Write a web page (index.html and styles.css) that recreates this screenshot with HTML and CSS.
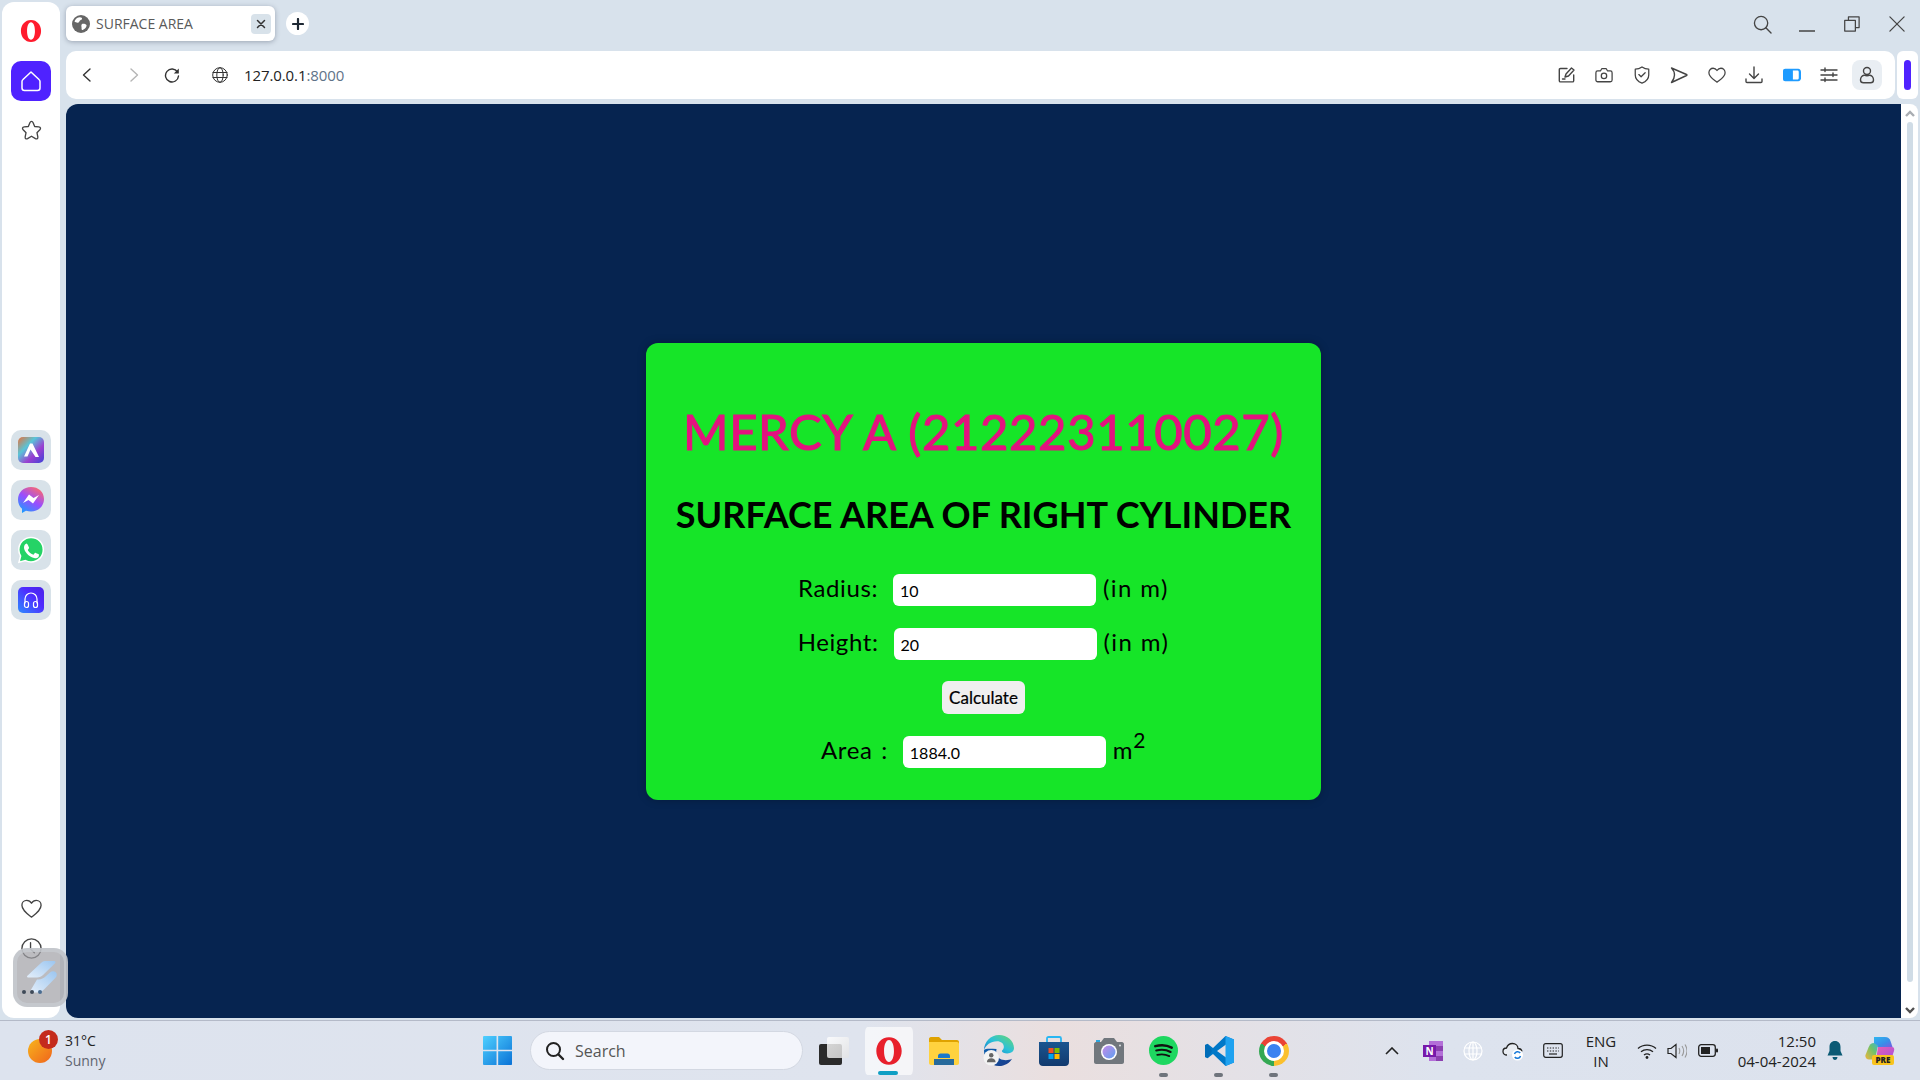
FILE: index.html
```html
<!DOCTYPE html>
<html lang="en">
<head>
  <meta charset="UTF-8" />
  <meta name="viewport" content="width=device-width, initial-scale=1.0" />
  <title>SURFACE AREA</title>
  <link rel="stylesheet" href="styles.css">
</head>
<body>
  <div class="browser">
    <aside class="sidebar">
      <svg class="opera-logo" viewBox="0 0 24 26"><path fill="#ff1b2d" fill-rule="evenodd" d="M12 1C5.5 1 1 6.4 1 13s4.5 12 11 12 11-5.4 11-12S18.500 1 12 1zm0 2.500c2.700 0 4.300 4.300 4.300 9.500s-1.600 9.500-4.300 9.500S7.700 18.200 7.700 13 9.300 3.500 12 3.500z"/></svg>
      <div class="home-tile">
        <svg viewBox="0 0 24 24" width="24" height="24"><path class="line-white" d="M12 3 4 10.500c-.7.6-1 1.200-1 2V19c0 1.500 1 2.500 2.500 2.500h13c1.500 0 2.500-1 2.500-2.500v-6.500c0-.8-.3-1.400-1-2z"/></svg>
      </div>
      <svg class="side-icon star-icon" viewBox="0 0 24 24"><path class="line" d="M12 2.500c.8 0 1.300.5 1.700 1.400l1.600 3.900 4.300.5c2 .3 2.300 1.700 1.100 3l-3 3 .9 4.300c.3 1.800-1 2.700-2.500 1.900L12 18l-4.100 2.500c-1.500.8-2.800-.1-2.500-1.900l.9-4.300-3-3c-1.200-1.300-.9-2.700 1.100-3l4.300-.5 1.600-3.900c.4-.9.9-1.400 1.700-1.400z"/></svg>

      <div class="app-tiles">
        <div class="app-tile">
          <svg viewBox="0 0 26 26" width="26" height="26">
            <defs><linearGradient id="ariaBg" x1="0" y1="0" x2="1" y2="1"><stop offset="0" stop-color="#e8703a"/><stop offset=".35" stop-color="#58c5d8"/><stop offset=".65" stop-color="#9a3fd0"/><stop offset="1" stop-color="#3d43d8"/></linearGradient></defs>
            <rect width="26" height="26" rx="5" fill="url(#ariaBg)"/>
            <path fill="#fff" d="M12 6.500 6 19.500h3.500l3-7 5 7.500h3.500L14.500 6.500z"/>
          </svg>
        </div>
        <div class="app-tile">
          <svg viewBox="0 0 28 28" width="28" height="28">
            <defs><linearGradient id="msgBg" x1=".2" y1="1" x2=".8" y2="0"><stop offset="0" stop-color="#1a9dff"/><stop offset=".5" stop-color="#9a4dff"/><stop offset="1" stop-color="#ff6968"/></linearGradient></defs>
            <path fill="url(#msgBg)" d="M14 1C6.700 1 1 6.300 1 13.500c0 3.700 1.500 7 4 9.300V27l4-2.200c1.500.4 3.200.7 5 .7 7.300 0 13-5.300 13-12.500S21.300 1 14 1z"/>
            <path fill="#fff" d="m6 17 6-8.500 4.500 3.500 5.500-3-6 8.500-4.500-3.500z"/>
          </svg>
        </div>
        <div class="app-tile">
          <svg viewBox="0 0 28 28" width="28" height="28">
            <path fill="#25d366" stroke="#fff" stroke-width="1.500" d="M14 1.500C7.200 1.500 1.800 7 1.800 13.700c0 2.300.7 4.500 1.800 6.300L2 26.300l6.500-1.700c1.700.9 3.500 1.400 5.500 1.400 6.800 0 12.300-5.500 12.300-12.300S20.800 1.500 14 1.500z"/>
            <path fill="#fff" d="M10 7.500c-.5 0-1.200.2-1.700.8C7.700 9 7 10 7 11.800s1.300 3.700 1.500 4c.2.3 2.600 4 6.300 5.500 3.100 1.200 3.700 1 4.400.9.7-.1 2.200-.9 2.500-1.800.3-.9.3-1.600.2-1.800-.1-.2-.3-.3-.7-.5l-2.500-1.200c-.4-.1-.6-.2-.9.2l-1.100 1.400c-.2.3-.4.3-.8.1-.4-.2-1.600-.6-3-1.800-1.100-1-1.800-2.200-2-2.600-.2-.4 0-.6.2-.8l.9-1.100c.1-.3.1-.5 0-.7l-1.100-2.700c-.3-.7-.6-.6-.9-.6z"/>
          </svg>
        </div>
        <div class="app-tile">
          <svg viewBox="0 0 26 26" width="26" height="26">
            <defs><linearGradient id="musicBg" x1="0" y1="1" x2="1" y2="0"><stop offset="0" stop-color="#2c8cff"/><stop offset=".6" stop-color="#4f2bff"/><stop offset="1" stop-color="#4a22e6"/></linearGradient></defs>
            <rect width="26" height="26" rx="5" fill="url(#musicBg)"/>
            <path class="line-thin-white" d="M7 16v-4a6 6 0 0 1 12 0v4"/>
            <rect class="line-thin-white" x="6.500" y="14.500" width="4" height="6" rx="2"/>
            <rect class="line-thin-white" x="15.500" y="14.500" width="4" height="6" rx="2"/>
          </svg>
        </div>
      </div>

      <svg class="side-icon heart-icon" viewBox="0 0 24 24"><path class="line" d="M12 21C7 17 2 13.500 2 8.500 2 5.500 4.300 3.500 7 3.500c2 0 3.800 1 5 3 1.200-2 3-3 5-3 2.700 0 5 2 5 5 0 5-5 8.500-10 12.500z"/></svg>
      <svg class="side-icon clock-icon" viewBox="0 0 24 24"><circle class="line" cx="12" cy="12" r="10"/><path class="line" d="M11 6v6.500l4 4"/></svg>

      <div class="drawer-tile">
        <svg viewBox="0 0 36 36" width="36" height="36">
          <defs><linearGradient id="drawerBg" x1="0" y1="1" x2="1" y2="0"><stop offset="0" stop-color="#e3eefa"/><stop offset="1" stop-color="#9cc6f0"/></linearGradient></defs>
          <path fill="url(#drawerBg)" d="M22 1h9c1.500 0 2 1.200 1 2.200L20 15c-1.600 1.600-3.400 2.500-6 2.500H5c-1 0-1.300-1-.6-1.700L18 3c1.200-1.200 2.500-2 4-2z"/>
          <path fill="url(#drawerBg)" d="M14 19.500h1.500c3-.2 5-1.200 7-3L27 12.500c1.500-1.300 4-1.500 5.500-.5 1.800 1.300 1.800 4-.2 6L21 29.500c-2 2-4 3-7 3H8c-1 0-1.300-1-.6-1.700z"/>
        </svg>
        <div class="drawer-dots"><i></i><i></i><i class="dot-blue"></i></div>
      </div>
    </aside>

    <div class="main">
      <div class="tabstrip">
        <div class="tab">
          <svg class="tab-globe" viewBox="0 0 18 18"><circle cx="9" cy="9" r="9" fill="#666"/><path fill="#fff" d="M5 3c2-1.300 4-1 5 0 .3 1.500-1 2-2 2.500-.7.5-.5 1.500-1.500 2C5.500 8 3.500 7.500 2.500 6.500 3 5 4 4 5 3zM10 9c1.500-.5 3.500 0 4.500 1 .3 1-.5 2.500-1.500 3.500-1 .8-2 1.500-3 1.500-.7-1-.3-2-.5-3-.2-1-.3-2.200.5-3z"/></svg>
          <span class="tab-title">SURFACE AREA</span>
          <span class="tab-close"><svg viewBox="0 0 10 10" width="10" height="10"><path class="line-dark" d="m1.500 1.500 7 7m0-7-7 7"/></svg></span>
        </div>
        <div class="new-tab"><svg viewBox="0 0 12 12" width="12" height="12"><path stroke="#1d2733" stroke-width="2.200" stroke-linecap="round" d="M6 1v10M1 6h10"/></svg></div>
        <div class="window-controls">
          <svg class="win-search" viewBox="0 0 20 20"><circle class="line-win" cx="8.500" cy="8.500" r="7"/><path class="line-win" d="m13.500 13.500 5.500 5.500"/></svg>
          <svg class="win-min" viewBox="0 0 17 2"><path class="line-win" d="M0 1h17"/></svg>
          <svg class="win-restore" viewBox="0 0 18 18"><rect class="line-win" x=".8" y="5" width="12" height="12"/><path class="line-win" d="M5 5V1h12v12h-4"/></svg>
          <svg class="win-close" viewBox="0 0 18 18"><path class="line-win" d="m1 1 16 16M17 1 1 17"/></svg>
        </div>
      </div>

      <div class="toolbar">
        <div class="addressbar">
          <svg class="nav-icon nav-back" viewBox="0 0 16 16"><path class="line-nav" d="M11 2 4.500 8 11 14"/></svg>
          <svg class="nav-icon nav-forward" viewBox="0 0 16 16"><path class="line-off" d="m5 2 6.500 6L5 14"/></svg>
          <svg class="nav-icon nav-reload" viewBox="0 0 16 16"><path class="line-nav" d="M13.500 5A6.500 6.500 0 1 0 14.500 9"/><path fill="#333" d="M14.800 1.500v5h-5z"/></svg>
          <svg class="nav-icon nav-globe" viewBox="0 0 16 16"><circle class="line-thin" cx="8" cy="8" r="7.300"/><ellipse class="line-thin" cx="8" cy="8" rx="3.200" ry="7.300"/><path class="line-thin" d="M1 5.500h14M1 10.500h14"/></svg>
          <span class="url">127.0.0.1<span class="url-port">:8000</span></span>
          <div class="toolbar-icons">
            <span class="tool-slot"><svg viewBox="0 0 18 18"><path class="line" d="M9 2.500H2.500c-.8 0-1.200.4-1.200 1.200v11c0 .8.4 1.200 1.200 1.200h12c.8 0 1.200-.4 1.200-1.200V9"/><path class="line" d="m7 11 1-3 5.500-6 2.500 2-5.500 6zM4.500 13H7"/></svg></span>
            <span class="tool-slot"><svg viewBox="0 0 20 18"><path class="line" d="M3 4.500h3L7.500 2h5L14 4.500h3c1 0 2 1 2 2v8c0 1.200-1 2-2 2H3c-1 0-2-.8-2-2v-8c0-1 1-2 2-2z"/><circle class="line" cx="10" cy="10" r="3"/></svg></span>
            <span class="tool-slot"><svg viewBox="0 0 18 20"><path class="line" d="M9 1c2 1.500 4.500 2.500 7.500 2.500V10c0 4.500-3.500 7.500-7.500 9-4-1.500-7.500-4.500-7.500-9V3.500C4.500 3.500 7 2.500 9 1z"/><path class="line" d="m5.500 9.500 2.500 2.500 4.500-4.500"/></svg></span>
            <span class="tool-slot"><svg viewBox="0 0 18 18"><path class="line" d="M1.500 2 16.500 8.500c.6.3.6.7 0 1L1.500 16.500c1.500-2 3-4.500 3-7.500s-1.500-5.500-3-7z"/></svg></span>
            <span class="tool-slot"><svg viewBox="0 0 20 18"><path class="line" d="M10 17C5.500 13.500 1 11 1 6.500 1 3.500 3.200 1.500 5.700 1.500c1.800 0 3.300 1 4.300 2.500 1-1.500 2.500-2.500 4.300-2.500C16.800 1.500 19 3.500 19 6.500c0 4.500-4.500 7-9 10.500z"/></svg></span>
            <span class="tool-slot"><svg viewBox="0 0 18 18"><path class="line" d="M9 1v11M4.500 8 9 12.500 13.500 8M1 13v2.500c0 .6.4 1 1 1h14c.6 0 1-.4 1-1V13"/></svg></span>
            <span class="tool-slot"><svg viewBox="0 0 20 14" class="tool-wide"><path fill="#1e9bff" d="M2.500 0H17c1.500 0 2.500 1 3 3v8c-.5 2-1.500 3-3 3H2.500C1 14 0 13 0 11.500v-9C0 1 1 0 2.500 0z"/><path fill="#fff" d="M11 2h5c.8 0 1.300.5 1.500 1.500v7c-.2 1-.7 1.500-1.500 1.500h-5z"/></svg></span>
            <span class="tool-slot"><svg viewBox="0 0 18 16"><path class="line" d="M1 3h16M1 8h16M1 13h16"/><path class="line" d="M5 1v3.500M13 6v3.500M5 11v3.500"/></svg></span>
            <span class="tool-slot tool-user"><svg viewBox="0 0 16 18"><circle class="line" cx="8" cy="5" r="3.500"/><path class="line" d="M1.500 14c0-2.500 1.800-4.500 3.500-4.800 2 .8 4 .8 6 0 1.700.3 3.500 2.300 3.500 4.800 0 1.800-1 2.800-3 2.800H4.500c-2 0-3-1-3-2.800z"/></svg></span>
          </div>
        </div>
        <div class="side-strip"><span class="strip-bar"></span></div>
      </div>

      <div class="viewport">
        <div class="page">
          <div class="card">
            <h1>MERCY A (212223110027)</h1>
            <h2>SURFACE AREA OF RIGHT CYLINDER</h2>
            <form class="calc-form">
              <div class="row">
                <label for="radius">Radius:</label>
                <input type="text" id="radius" value="10" />
                <span class="unit">(in m)</span>
              </div>
              <div class="row">
                <label for="height">Height:</label>
                <input type="text" id="height" value="20" />
                <span class="unit">(in m)</span>
              </div>
              <div class="row">
                <button type="button">Calculate</button>
              </div>
              <div class="row">
                <label class="label-area" for="area">Area :</label>
                <input type="text" id="area" value="1884.0" />
                <span class="unit unit-area">m<sup>2</sup></span>
              </div>
            </form>
          </div>
        </div>
        <div class="scrollbar">
          <svg viewBox="0 0 10 7" width="10" height="7"><path stroke="#a9adb2" stroke-width="2.400" fill="none" d="m1 6 4-4 4 4"/></svg>
          <span class="scroll-thumb"></span>
          <svg class="scroll-down" viewBox="0 0 10 7" width="10" height="7"><path stroke="#505050" stroke-width="2.400" fill="none" d="m1 1 4 4 4-4"/></svg>
        </div>
      </div>
    </div>
  </div>

  <footer class="taskbar">
    <div class="weather">
      <span class="sun"><span class="sun-badge">1</span></span>
      <div class="weather-text">
        <span class="temp">31°C</span>
        <span class="cond">Sunny</span>
      </div>
    </div>

    <div class="task-center">
      <span class="slot">
        <svg viewBox="0 0 30 30" width="29" height="29">
          <defs><linearGradient id="winBg" x1="0" y1="0" x2="1" y2="1"><stop offset="0" stop-color="#4fd0ff"/><stop offset="1" stop-color="#0a72d6"/></linearGradient></defs>
          <path fill="url(#winBg)" d="M1 0h13v14.300H0V1c0-.6.4-1 1-1zM15.700 0H29c.6 0 1 .4 1 1v13.300H15.700zM0 15.700h14V30H1c-.6 0-1-.4-1-1zM15.700 15.700H30V29c0 .6-.4 1-1 1H15.700z"/>
        </svg>
      </span>
      <div class="search-pill">
        <svg viewBox="0 0 20 20" width="20" height="20"><circle cx="8.500" cy="8.500" r="6.500" fill="none" stroke="#222" stroke-width="2"/><path stroke="#222" stroke-width="2.400" stroke-linecap="round" d="m13.500 13.500 4.500 4.500"/></svg>
        <span>Search</span>
      </div>
      <span class="slot">
        <svg viewBox="0 0 30 28" width="30" height="28">
          <defs><linearGradient id="viewTop" x1="0" y1="0" x2="1" y2="1"><stop offset="0" stop-color="#ffffff"/><stop offset="1" stop-color="#e3e3e3"/></linearGradient></defs>
          <rect y="7" width="23" height="21" rx="2" fill="#2b2b2b"/>
          <rect x="8" y="0" width="22" height="21" rx="2" fill="url(#viewTop)" fill-opacity=".82"/>
        </svg>
      </span>
      <span class="slot slot-active">
        <svg viewBox="0 0 24 26" width="28" height="30"><path fill="#e8202c" fill-rule="evenodd" d="M12 1C5.500 1 1 6.400 1 13s4.500 12 11 12 11-5.400 11-12S18.500 1 12 1zm0 2.500c2.700 0 4.300 4.300 4.300 9.500s-1.600 9.500-4.300 9.500S7.700 18.200 7.700 13 9.300 3.500 12 3.500z"/></svg>
        <i class="run-active"></i>
      </span>
      <span class="slot">
        <svg viewBox="0 0 30 28" width="30" height="28"><path fill="#dfa200" d="M0 2c0-1 .6-2 2-2h8l3 3h15c1 0 2 .8 2 2v5H0z"/><path fill="#ffd23f" d="M0 5h28c1.200 0 2 .8 2 2v19c0 1-.8 2-2 2H2c-1 0-2-1-2-2z"/><path fill="#1a78c9" d="M9 19c0-1.500 1-2.500 2.500-2.500h7c1.500 0 2.500 1 2.500 2.500v2H9z"/><path fill="#0f5ea6" d="M5 22h20v6H5z" fill-opacity=".9"/></svg>
      </span>
      <span class="slot">
        <svg viewBox="0 0 32 32" width="31" height="31">
          <defs>
            <linearGradient id="edgeTop" x1="0" y1="1" x2="1" y2="0"><stop offset="0" stop-color="#1277c9"/><stop offset=".5" stop-color="#2cc1d8"/><stop offset="1" stop-color="#6ad86c"/></linearGradient>
            <linearGradient id="edgeLow" x1="0" y1="0" x2="1" y2="1"><stop offset="0" stop-color="#0e5fae"/><stop offset="1" stop-color="#1a3c8a"/></linearGradient>
          </defs>
          <path fill="url(#edgeTop)" d="M1 16C1 7 8 0 16.500 0 25 0 32 6 32 13.500c0 3.500-3 5.500-7 5.500-3 0-5.500-1-5.500-2.500 0-1 2-1.500 2-4.500 0-3-3-5.500-7-5.500C8 6.500 2.500 10.500 1 16z"/>
          <path fill="url(#edgeLow)" d="M1 16c0 9 7 16 15.500 16 6 0 11-3 13.500-7.500-4 2-9 2-12.500 0-3-1.800-4.500-6-3.500-10-6 0-11.500-1-13 1.500z"/>
          <circle cx="8.500" cy="23.500" r="8" fill="#f3f3f3"/>
          <circle cx="8.500" cy="21" r="2.300" fill="#666"/><path fill="#666" d="M4 28c0-2.500 2-4 4.500-4s4.500 1.500 4.500 4z"/>
        </svg>
      </span>
      <span class="slot">
        <svg viewBox="0 0 30 30" width="30" height="30">
          <defs><linearGradient id="storeBg" x1="0" y1="0" x2="0" y2="1"><stop offset="0" stop-color="#1a5590"/><stop offset="1" stop-color="#123a6e"/></linearGradient></defs>
          <path fill="none" stroke="#29b6f2" stroke-width="1.800" d="M8 7V2.500C8 1.500 8.500 1 9.500 1h11c1 0 1.500.5 1.500 1.500V7"/>
          <path fill="url(#storeBg)" d="M0 6h30v20c0 2.500-1.500 4-4 4H4c-2.500 0-4-1.500-4-4z"/>
          <rect x="9.500" y="12" width="5" height="5" fill="#f25022"/><rect x="15.500" y="12" width="5" height="5" fill="#7fba00"/><rect x="9.500" y="18" width="5" height="5" fill="#00a4ef"/><rect x="15.500" y="18" width="5" height="5" fill="#ffb900"/>
        </svg>
      </span>
      <span class="slot">
        <svg viewBox="0 0 30 26" width="30" height="26">
          <defs><linearGradient id="lensBg" x1="0" y1="0" x2="1" y2="1"><stop offset="0" stop-color="#c58be8"/><stop offset="1" stop-color="#5f9ff0"/></linearGradient></defs>
          <path fill="#71777d" d="M2 4h5l3-4h10l3 4h5c1 0 2 1 2 2v18c0 1-1 2-2 2H2c-1 0-2-1-2-2V6c0-1 1-2 2-2z"/>
          <rect x="2" y="2" width="4" height="2" fill="#2da7e0"/>
          <circle cx="15" cy="14" r="8" fill="#fff"/><circle cx="15" cy="14" r="6.500" fill="url(#lensBg)"/>
          <circle cx="26" cy="7.500" r="1" fill="#dfe3e6"/>
        </svg>
      </span>
      <span class="slot">
        <svg viewBox="0 0 30 30" width="29" height="29"><circle cx="15" cy="15" r="15" fill="#1ed760"/><path fill="none" stroke="#111" stroke-width="2.600" stroke-linecap="round" d="M6.500 10.500c5.500-1.500 12-1.200 17 1.500"/><path fill="none" stroke="#111" stroke-width="2.200" stroke-linecap="round" d="M7.500 15c5-1.200 10.500-.8 14.800 1.500"/><path fill="none" stroke="#111" stroke-width="1.800" stroke-linecap="round" d="M8.500 19.500c4.200-1 8.800-.6 12.500 1.300"/></svg>
        <i class="run-dot"></i>
      </span>
      <span class="slot">
        <svg viewBox="0 0 30 30" width="30" height="30"><path fill="#0078c8" d="M21.500 0 9 12 3.500 7.800 1 9v12l2.500 1.200L9 18l12.500 12 8.500-3.500V3.500zM22 8.500v13L13 15z"/><path fill="#1fa2f0" d="M21.500 0 30 3.500v23L21.500 30z"/><path fill="#0065ad" d="M1 9v12l3 1 4-7-4-7z" fill-opacity=".6"/></svg>
        <i class="run-dot"></i>
      </span>
      <span class="slot">
        <span class="chrome-icon"><span class="chrome-eye"></span></span>
        <i class="run-dot"></i>
      </span>
    </div>

    <div class="tray">
      <svg class="tray-chevron" viewBox="0 0 14 8" width="14" height="8"><path fill="none" stroke="#222" stroke-width="1.600" d="m1 7 6-6 6 6"/></svg>
      <svg class="tray-note" viewBox="0 0 20 20" width="20" height="20"><path fill="#b36fd8" d="M6 0h14v20H6z"/><path fill="#8c3fb0" d="M13 5h7v5h-7zM13 15h7v5h-7z"/><rect y="4" width="13" height="12" fill="#7719aa"/><text x="6.500" y="13.500" class="note-letter">N</text></svg>
      <svg class="tray-globe" viewBox="0 0 20 20" width="20" height="20"><circle cx="10" cy="10" r="9" fill="none" stroke="#fff" stroke-width="1.200"/><ellipse cx="10" cy="10" rx="4" ry="9" fill="none" stroke="#fff" stroke-width="1.200"/><path stroke="#fff" stroke-width="1.200" d="M1 7h18M1 13h18M10 1v18"/></svg>
      <svg class="tray-cloud" viewBox="0 0 22 20" width="22" height="20"><path fill="#e8ecf2" stroke="#222" stroke-width="1.300" d="M5 14C2.500 14 1 12.500 1 10.500S2.500 7 4.500 7C5.500 4 7.500 2.500 10.500 2.500c3 0 5.500 2 5.500 5 2 0 3.500 1 4 3"/><circle cx="15.500" cy="14" r="5.500" fill="#fff"/><path fill="none" stroke="#1678d8" stroke-width="1.500" d="M12.500 13a3.200 3.200 0 0 1 5.700-1M18.500 15a3.200 3.200 0 0 1-5.700 1"/></svg>
      <svg class="tray-keys" viewBox="0 0 20 15" width="20" height="15"><rect x=".7" y=".7" width="18.600" height="13.600" rx="2" fill="none" stroke="#222" stroke-width="1.200"/><path stroke="#222" stroke-width="1.200" stroke-dasharray="1.400 1.400" d="M4 5h12M4 8h12"/><path stroke="#222" stroke-width="1.200" d="M6 11h8"/></svg>
      <div class="lang"><span>ENG</span><span>IN</span></div>
      <svg class="tray-wifi" viewBox="0 0 20 16" width="20" height="16"><path fill="none" stroke="#222" stroke-width="1.300" d="M1 5.500c5-4.500 13-4.500 18 0M4 8.800c3.500-3 8.500-3 12 0M7 12c1.700-1.300 4.300-1.300 6 0"/><circle cx="10" cy="14.500" r="1.400" fill="#222"/></svg>
      <svg class="tray-sound" viewBox="0 0 20 16" width="20" height="16"><path fill="none" stroke="#222" stroke-width="1.200" d="M1 5.500h3L9 1.500v13l-5-4H1z"/><path fill="none" stroke="#999" stroke-width="1.100" d="M12 5c1 2 1 4 0 6M15 3c2 3 2 7 0 10M18 1.500c2.500 4 2.500 9 0 13"/></svg>
      <svg class="tray-battery" viewBox="0 0 20 13" width="20" height="13"><rect x=".7" y=".7" width="16.600" height="11.600" rx="2.500" fill="none" stroke="#222" stroke-width="1.300"/><rect x="3" y="3" width="9" height="7" fill="#222"/><rect x="18" y="4.500" width="2" height="4" rx="1" fill="#222"/></svg>
      <div class="clock"><span>12:50</span><span>04-04-2024</span></div>
      <svg class="tray-bell" viewBox="0 0 16 20" width="16" height="20"><path fill="#0b5a75" d="M8 0c3.500 0 5.500 2.500 5.500 6v4l2 4.500H.5l2-4.500V6C2.500 2.500 4.500 0 8 0zM5.500 16h5C10.300 18 9.300 19 8 19s-2.300-1-2.500-3z"/></svg>
      <svg class="tray-copilot" viewBox="0 0 30 30" width="30" height="30">
        <defs>
          <linearGradient id="copA" x1="0" y1="0" x2="1" y2="1"><stop offset="0" stop-color="#2fb7f0"/><stop offset=".6" stop-color="#3a8ce8"/><stop offset="1" stop-color="#7b5be0"/></linearGradient>
          <linearGradient id="copB" x1="0" y1="1" x2="1" y2="0"><stop offset="0" stop-color="#f2b53a"/><stop offset=".6" stop-color="#6cc36a"/><stop offset="1" stop-color="#3cb5d8"/></linearGradient>
          <linearGradient id="copC" x1="0" y1="0" x2="1" y2="1"><stop offset="0" stop-color="#e860b0"/><stop offset="1" stop-color="#a44fe0"/></linearGradient>
        </defs>
        <path fill="url(#copA)" d="M9 1h11c3 0 4.500 1.500 5.500 4l2 6H13L9 9z"/>
        <path fill="url(#copB)" d="M9 7c-3 0-4.500 2-5.500 4.500L.5 19c-.7 2.500 1 4.500 3.500 4.500h6l3-14z"/>
        <path fill="url(#copC)" d="M13 11h14c2 0 2.700 2 2 4l-2 6c-.5 1.500-1.500 2.500-3 2.500H11z"/>
        <rect x="7" y="19" width="22" height="10" rx="2" fill="#f8c31d"/>
        <text x="18" y="27" class="pre-badge">PRE</text>
      </svg>
    </div>
  </footer>
</body>
</html>
```

FILE: styles.css
```css
* {
  box-sizing: border-box;
}
body {
  margin: 0;
  width: 1920px;
  height: 1080px;
  overflow: hidden;
  background-color: #d8e2ec;
  font-family: "Open Sans", "Noto Sans", sans-serif;
  color: #222;
}
svg {
  display: block;
  flex: none;
}
.line, .line-white, .line-thin-white, .line-dark, .line-win, .line-nav, .line-off, .line-thin {
  fill: none;
  stroke-linecap: round;
  stroke-linejoin: round;
}
.line { stroke: #444; stroke-width: 1.4; }
.line-white { stroke: #fff; stroke-width: 1.5; }
.line-thin-white { stroke: #fff; stroke-width: 1.2; }
.line-dark { stroke: #333; stroke-width: 1.5; }
.line-win { stroke: #444; stroke-width: 1.4; }
.line-nav { stroke: #333; stroke-width: 1.4; }
.line-off { stroke: #b5b5b5; stroke-width: 1.4; }
.line-thin { stroke: #333; stroke-width: 1; }

.browser {
  display: flex;
  height: 1020px;
}

/* left sidebar */
.sidebar {
  position: relative;
  display: flex;
  flex-direction: column;
  align-items: center;
  width: 58px;
  margin: 2px 0 2px 2px;
  padding: 17px 0 58px;
  background: #fff;
  border-radius: 12px;
}
.opera-logo {
  width: 22px;
  height: 24px;
}
.home-tile {
  display: flex;
  align-items: center;
  justify-content: center;
  width: 40px;
  height: 40px;
  margin-top: 18px;
  background: #4f22ff;
  border-radius: 10px;
}
.side-icon {
  width: 23px;
  height: 23px;
}
.star-icon {
  margin-top: 18px;
}
.app-tiles {
  display: flex;
  flex-direction: column;
  gap: 10px;
  margin-top: 288px;
}
.app-tile {
  display: flex;
  align-items: center;
  justify-content: center;
  width: 40px;
  height: 40px;
  background: #d8e2e9;
  border-radius: 10px;
}
.heart-icon {
  margin-top: auto;
}
.clock-icon {
  margin-top: 17px;
}
.drawer-tile {
  position: absolute;
  left: 11px;
  top: 946px;
  display: flex;
  align-items: center;
  justify-content: center;
  width: 55px;
  height: 59px;
  background: rgba(160, 160, 165, 0.7);
  border: 4px solid rgba(200, 204, 210, 0.75);
  border-radius: 14px;
}
.drawer-dots {
  position: absolute;
  left: 5px;
  bottom: 9px;
  display: flex;
  gap: 4px;
}
.drawer-dots i {
  width: 4px;
  height: 4px;
  background: #3f4a58;
  border-radius: 50%;
}
.drawer-dots .dot-blue {
  background: #4a6c90;
}

/* tab strip and toolbar */
.main {
  flex: 1;
  display: flex;
  flex-direction: column;
  min-width: 0;
  margin: 0 2px 2px 6px;
}
.tabstrip {
  display: flex;
  align-items: flex-start;
  height: 51px;
  padding-top: 6px;
}
.tab {
  display: flex;
  align-items: center;
  width: 209px;
  height: 35px;
  padding: 0 4px 0 6px;
  background: #fff;
  border-radius: 6px;
  box-shadow: 0 1px 5px rgba(60, 70, 90, 0.4);
}
.tab-globe {
  width: 18px;
  height: 18px;
}
.tab-title {
  margin-left: 6px;
  font-size: 14px;
  color: #5a5a5a;
}
.tab-close {
  display: flex;
  align-items: center;
  justify-content: center;
  width: 20px;
  height: 20px;
  margin-left: auto;
  background: #d8e2ea;
  border-radius: 4px;
}
.new-tab {
  display: flex;
  align-items: center;
  justify-content: center;
  width: 23px;
  height: 23px;
  margin: 6px 0 0 11px;
  background: #fff;
  border-radius: 50%;
}
.window-controls {
  display: flex;
  align-items: center;
  height: 36px;
  margin-left: auto;
  padding-right: 13px;
}
.win-search { width: 19px; height: 19px; }
.win-min { width: 16px; height: 2px; margin: 14px 0 0 27px; }
.win-restore { width: 16px; height: 16px; margin-left: 29px; }
.win-close { width: 16px; height: 16px; margin-left: 29px; }

.toolbar {
  display: flex;
  gap: 2px;
  height: 48px;
}
.addressbar {
  flex: 1;
  display: flex;
  align-items: center;
  min-width: 0;
  padding-left: 13px;
  background: #fff;
  border-radius: 10px;
}
.nav-icon {
  width: 16px;
  height: 16px;
}
.nav-forward { margin-left: 31px; }
.nav-reload { margin-left: 22px; }
.nav-globe { margin-left: 32px; }
.url {
  margin-left: 16px;
  font-size: 15px;
  letter-spacing: -0.1px;
  color: #222;
}
.url-port {
  color: #5f7388;
}
.toolbar-icons {
  display: flex;
  align-items: center;
  margin-left: auto;
  padding-right: 13px;
}
.tool-slot {
  display: flex;
  align-items: center;
  justify-content: center;
  width: 37.5px;
  height: 30px;
}
.tool-slot svg {
  width: 18px;
  height: 18px;
}
.tool-slot .tool-wide {
  width: 18px;
  height: 14px;
}
.tool-user {
  width: 30px;
  margin-left: 4px;
  background: #e9eef3;
  border-radius: 8px;
}
.side-strip {
  display: flex;
  align-items: center;
  justify-content: center;
  width: 21px;
  background: #fff;
  border-radius: 6px;
}
.strip-bar {
  width: 7px;
  height: 30px;
  background: #4f22ff;
  border-radius: 4px;
}

/* page area */
.viewport {
  flex: 1;
  display: flex;
  margin-top: 5px;
  min-height: 0;
}
.page {
  flex: 1;
  display: flex;
  align-items: center;
  justify-content: center;
  padding-top: 21px;
  background: #062450;
  border-radius: 12px 0 0 12px;
}
.scrollbar {
  display: flex;
  flex-direction: column;
  align-items: center;
  width: 17px;
  padding: 6px 0 4px;
  background: #fff;
  border-radius: 0 8px 8px 0;
}
.scroll-thumb {
  width: 6px;
  height: 860px;
  margin-top: 5px;
  background: #d0dce6;
  border-radius: 3px;
}
.scroll-down {
  margin-top: auto;
}

/* the card */
.card {
  width: 675px;
  height: 457px;
  padding-top: 58px;
  background: #16e528;
  border-radius: 12px;
  box-shadow: 0 0 8px rgba(0, 0, 0, 0.25);
  font-family: Lato, "Open Sans", sans-serif;
  color: #000;
  text-align: center;
}
.card h1 {
  margin: 0;
  font-size: 49px;
  font-weight: 400;
  line-height: 60px;
  letter-spacing: 0.6px;
  -webkit-text-stroke: 1.1px #e3137f;
  color: #e3137f;
}
.card h2 {
  margin: 31px 0 0;
  font-size: 36px;
  font-weight: 700;
  line-height: 44px;
}
.calc-form {
  display: flex;
  flex-direction: column;
  gap: 21px;
  margin-top: 38px;
}
.row {
  display: flex;
  align-items: center;
  justify-content: center;
  font-size: 24px;
  line-height: 28px;
  letter-spacing: 0.6px;
}
.row:nth-child(1), .row:nth-child(3) {
  margin-bottom: 1px;
}
.row label, .unit {
  padding-bottom: 4px;
}
.label-area {
  word-spacing: 2px;
}
.row input {
  width: 203px;
  height: 32px;
  margin-left: 15px;
  padding: 0 7px;
  border: none;
  border-radius: 6px;
  background: #fff;
  font-family: Lato, sans-serif;
  font-size: 16px;
  letter-spacing: 0;
  color: #000;
}
.unit {
  margin-left: 7px;
  letter-spacing: 1.4px;
}
.unit-area {
  letter-spacing: 0.6px;
}
.unit sup {
  font-size: 21px;
  line-height: 0;
  vertical-align: 11px;
}
.row button {
  width: 83px;
  height: 33px;
  padding: 0;
  border: none;
  border-radius: 6px;
  background: #efefef;
  font-family: Lato, sans-serif;
  font-size: 17px;
  letter-spacing: 0;
  -webkit-text-stroke: 0.2px #000;
  color: #000;
}

/* windows taskbar */
.taskbar {
  position: relative;
  display: flex;
  align-items: center;
  height: 60px;
  border-top: 1px solid #b4bac8;
  background: linear-gradient(90deg, #dde3ee 0, #dfe4ee 45%, #eadfdf 55%, #dde3ee 75%, #dce2ed 100%);
}
.weather {
  display: flex;
  align-items: center;
  width: 470px;
  padding-left: 28px;
}
.sun {
  position: relative;
  width: 24px;
  height: 24px;
  background: linear-gradient(135deg, #f7b51c, #f0641c);
  border-radius: 50%;
}
.sun-badge {
  position: absolute;
  left: 11px;
  top: -9px;
  width: 19px;
  height: 19px;
  background: #c42b1c;
  border-radius: 50%;
  font-size: 12px;
  font-weight: 600;
  line-height: 19px;
  text-align: center;
  color: #fff;
}
.weather-text {
  display: flex;
  flex-direction: column;
  margin-left: 13px;
  font-size: 14px;
  line-height: 20px;
}
.cond {
  color: #5f6570;
}
.task-center {
  display: flex;
  align-items: center;
}
.slot {
  position: relative;
  display: flex;
  align-items: center;
  justify-content: center;
  width: 55px;
  height: 48px;
}
.slot-active {
  background: rgba(255, 255, 255, 0.65);
  background-clip: content-box;
  padding: 0 3.5px;
  border-radius: 6px;
}
.run-active {
  position: absolute;
  left: 17px;
  bottom: 0;
  width: 20px;
  height: 4px;
  background: #0f9fc4;
  border-radius: 2px;
}
.run-dot {
  position: absolute;
  left: 23px;
  bottom: -2px;
  width: 9px;
  height: 4px;
  background: #6f747c;
  border-radius: 2px;
}
.search-pill {
  display: flex;
  align-items: center;
  gap: 10px;
  width: 273px;
  height: 39px;
  margin: 0 3px 0 5px;
  padding-left: 14px;
  background: #f3f5fb;
  border: 1px solid #d3d8e2;
  border-radius: 20px;
  font-size: 16px;
  color: #555;
}
.chrome-icon {
  display: flex;
  align-items: center;
  justify-content: center;
  width: 30px;
  height: 30px;
  border-radius: 50%;
  background: conic-gradient(from -60deg, #ea4335 0 120deg, #fbc02d 120deg 240deg, #34a853 240deg);
}
.chrome-eye {
  width: 14px;
  height: 14px;
  background: #3b82f0;
  border: 3px solid #fff;
  border-radius: 50%;
  box-sizing: content-box;
  margin: -3px;
}
.tray {
  display: flex;
  align-items: center;
  margin-left: auto;
  height: 100%;
  padding-right: 25px;
}
.tray-note { margin-left: 24px; }
.tray-globe { margin-left: 20px; }
.tray-cloud { margin-left: 19px; }
.tray-keys { margin-left: 19px; }
.note-letter {
  font-family: "Open Sans", sans-serif;
  font-size: 10px;
  font-weight: 700;
  fill: #fff;
  text-anchor: middle;
}
.lang {
  display: flex;
  flex-direction: column;
  align-items: center;
  width: 34px;
  margin-left: 21px;
  font-size: 15px;
  line-height: 20px;
}
.tray-wifi { margin-left: 19px; }
.tray-sound { margin-left: 10px; }
.tray-battery { margin-left: 11px; }
.clock {
  display: flex;
  flex-direction: column;
  align-items: flex-end;
  width: 80px;
  margin-left: 18px;
  font-size: 15px;
  line-height: 20px;
}
.tray-bell { margin-left: 11px; }
.tray-copilot { margin-left: 22px; }
.pre-badge {
  font-family: "Open Sans", sans-serif;
  font-size: 8px;
  font-weight: 800;
  fill: #222;
  text-anchor: middle;
}
```
